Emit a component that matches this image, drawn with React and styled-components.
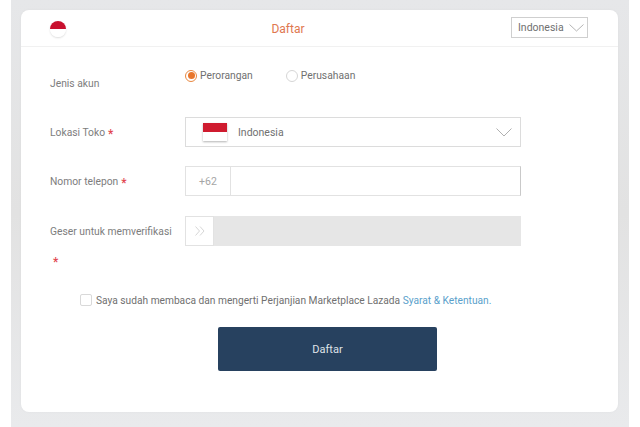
import React from "react";
import styled, { createGlobalStyle } from "styled-components";

const Global = createGlobalStyle`
  html, body { margin: 0; padding: 0; background: #fff; }
  body { width: 640px; height: 427px; overflow: hidden; font-family: Roboto, "Liberation Sans", sans-serif; }
`;

const Backdrop = styled.div`
  box-sizing: border-box;
  width: 618px;
  height: 427px;
  margin-left: 11px;
  padding: 10px 11px 15px 10px;
  background: linear-gradient(180deg, #e6e7e9 0%, #e2e2e2 50%, #e9eaec 100%);
`;

const Card = styled.main`
  box-sizing: border-box;
  height: 402px;
  background: #fff;
  border-radius: 8px;
  box-shadow: 0 0 3px rgba(0, 0, 0, 0.04);
`;

const Header = styled.header`
  box-sizing: border-box;
  height: 37px;
  padding: 7px 30px 0 29px;
  border-bottom: 1px solid #f1f1f1;
  display: grid;
  grid-template-columns: 80px 1fr 142px;
  align-items: start;
`;

const RoundFlag = styled.span`
  display: block;
  width: 16px;
  height: 16px;
  margin-top: 4px;
  border-radius: 50%;
  background: linear-gradient(180deg, #c8102e 0 50%, #fff 50% 100%);
  box-shadow: 0 1px 2px rgba(0, 0, 0, 0.14);
`;

const Title = styled.h1`
  margin: 5px 0 0;
  text-align: center;
  font-size: 12px;
  line-height: 14px;
  font-weight: 400;
  color: #e0774f;
`;

const LangSelect = styled.div`
  box-sizing: border-box;
  justify-self: end;
  width: 77px;
  height: 21px;
  padding: 0 3px 0 6px;
  border: 1px solid #cfcfcf;
  display: flex;
  align-items: center;
  justify-content: space-between;
  font-size: 10.5px;
  color: #707070;
`;

const Form = styled.form`
  padding: 0 97px 0 29px;
`;

const Row = styled.div`
  display: grid;
  grid-template-columns: 135px 336px;
  margin-top: ${(p) => p.$top}px;
  min-height: ${(p) => p.$h}px;
`;

const Label = styled.label`
  font-size: 10.3px;
  line-height: 32px;
  height: 30px;
  color: #7d7d7d;
  white-space: nowrap;
`;

const TypeLabel = styled(Label)`
  line-height: 14px;
  height: auto;
  padding-top: 30px;
`;

const Req = styled.span`
  color: #e2464f;
  margin-left: 3px;
  font-size: 12px;
  font-weight: 500;
  vertical-align: -2px;
  line-height: 1;
`;

const LoneReq = styled.div`
  margin: 9px 0 0;
  padding-left: 3px;
  height: 14px;
  font-size: 12px;
  font-weight: 500;
  line-height: 14px;
  color: #e2464f;
`;

const Radios = styled.div`
  display: flex;
  align-items: center;
  gap: 33px;
  margin-top: 21px;
  height: 14px;
`;

const RadioOption = styled.span`
  display: flex;
  align-items: center;
  gap: 3px;
  font-size: 10.3px;
  color: #707070;
`;

const RadioMark = styled.span`
  box-sizing: border-box;
  width: 12px;
  height: 12px;
  margin-top: 1px;
  border-radius: 50%;
  border: 1px solid ${(p) => (p.$on ? "#e8873f" : "#d6d6d6")};
  display: flex;
  align-items: center;
  justify-content: center;
  &::after {
    content: "";
    width: 7px;
    height: 7px;
    border-radius: 50%;
    background: ${(p) => (p.$on ? "#e8762c" : "transparent")};
  }
`;

const SelectBox = styled.div`
  box-sizing: border-box;
  height: 30px;
  padding: 0 8px 0 17px;
  border: 1px solid #dcdcdc;
  display: flex;
  align-items: center;
  font-size: 10.5px;
  color: #707070;
`;

const Flag = styled.span`
  width: 24px;
  height: 18px;
  margin-right: 11px;
  background: linear-gradient(180deg, #cf1b2f 0 50%, #fff 50% 100%);
  box-shadow: 0 1px 2px rgba(0, 0, 0, 0.3);
`;

const Grow = styled.span`
  flex: 1;
`;

const PhoneBox = styled.div`
  box-sizing: border-box;
  height: 30px;
  border: 1px solid #e2e2e2;
  border-right-color: #c9c9c9;
  display: flex;
`;

const Prefix = styled.span`
  width: 44px;
  border-right: 1px solid #e2e2e2;
  display: flex;
  align-items: center;
  justify-content: center;
  font-size: 10.5px;
  color: #a5a5a5;
`;

const Slider = styled.div`
  height: 30px;
  background: #e6e6e6;
`;

const Handle = styled.span`
  box-sizing: border-box;
  width: 29px;
  height: 30px;
  background: #fff;
  border: 1px solid #e2e2e2;
  display: flex;
  align-items: center;
  justify-content: center;
`;

const Agreement = styled.div`
  display: flex;
  align-items: center;
  gap: 4px;
  margin: 24px 0 0 30px;
  height: 14px;
  font-size: 10.2px;
  color: #707070;
  white-space: nowrap;
`;

const Check = styled.span`
  box-sizing: border-box;
  width: 12px;
  height: 12px;
  border: 1px solid #d9d9d9;
  border-radius: 2px;
`;

const Terms = styled.a`
  color: #5a9fcb;
`;

const Submit = styled.button`
  display: block;
  width: 219px;
  height: 44px;
  margin: 20px 0 0 168px;
  border: 0;
  border-radius: 2px;
  background: #27415f;
  color: #dfe3e8;
  font-family: inherit;
  font-size: 11px;
`;

const Chevron = ({ w, h, color }) => (
  <svg width={w} height={h} viewBox={`0 0 ${w} ${h}`} fill="none">
    <path d={`M0.5 0.5 L${w / 2} ${h - 1} L${w - 0.5} 0.5`} stroke={color} strokeWidth="1" />
  </svg>
);

export default function App() {
  return (
    <Backdrop>
      <Global />
      <Card>
        <Header>
          <RoundFlag />
          <Title>Daftar</Title>
          <LangSelect>
            Indonesia
            <Chevron w={15} h={8} color="#b5b5b5" />
          </LangSelect>
        </Header>
        <Form>
          <Row $top={0} $h={70}>
            <TypeLabel>Jenis akun</TypeLabel>
            <Radios>
              <RadioOption><RadioMark $on />Perorangan</RadioOption>
              <RadioOption><RadioMark />Perusahaan</RadioOption>
            </Radios>
          </Row>
          <Row $top={0} $h={30}>
            <Label>Lokasi Toko<Req>*</Req></Label>
            <SelectBox>
              <Flag />
              Indonesia
              <Grow />
              <Chevron w={16} h={9} color="#b0b0b0" />
            </SelectBox>
          </Row>
          <Row $top={19} $h={30}>
            <Label>Nomor telepon<Req>*</Req></Label>
            <PhoneBox><Prefix>+62</Prefix></PhoneBox>
          </Row>
          <Row $top={20} $h={30}>
            <Label>Geser untuk memverifikasi</Label>
            <Slider>
              <Handle>
                <svg width="10" height="10" viewBox="0 0 10 10" fill="none">
                  <path d="M0.5 0.5 L4.5 5 L0.5 9.5 M5 0.5 L9 5 L5 9.5" stroke="#d6d6d6" />
                </svg>
              </Handle>
            </Slider>
          </Row>
          <LoneReq>*</LoneReq>
          <Agreement>
            <Check />
            <span>Saya sudah membaca dan mengerti Perjanjian Marketplace Lazada <Terms>Syarat &amp; Ketentuan.</Terms></span>
          </Agreement>
          <Submit type="button">Daftar</Submit>
        </Form>
      </Card>
    </Backdrop>
  );
}
